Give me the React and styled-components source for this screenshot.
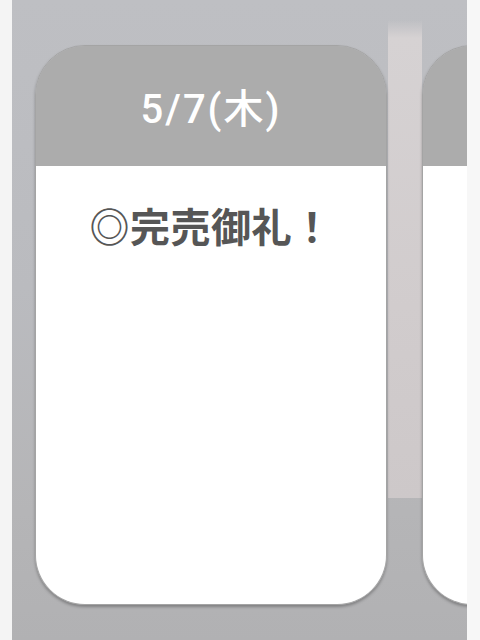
import React from 'react'
import styled, { createGlobalStyle } from 'styled-components'

const GlobalStyle = createGlobalStyle`
  html, body {
    margin: 0;
    padding: 0;
    background: #f5f5f5;
    font-family: "Noto Sans CJK JP", "Liberation Sans", sans-serif;
  }
`

const Page = styled.div`
  display: flex;
  width: 480px;
  height: 640px;
  overflow: hidden;
`

const Edge = styled.div`
  flex: 0 0 ${props => props.width}px;
  background: ${props => props.color};
`

// blurred photo behind the cards, with the light band that shows between them
const Stage = styled.div`
  flex: 1;
  display: flex;
  align-items: flex-start;
  gap: 35px;
  padding: 45px 0 0 23px;
  overflow: hidden;
  background:
    linear-gradient(to bottom, rgba(214,210,211,0) 0px, #d6d2d3 18px, #d1cccd 60%, #cdc8c9 100%) 376px 20px / 34px 478px no-repeat,
    linear-gradient(to bottom, #bebfc3 0%, #babbbf 45%, #b5b5b7 80%, #b1b1b3 100%);
`

const Card = styled.div`
  flex: 0 0 352px;
  height: 560px;
  display: flex;
  flex-direction: column;
  border-radius: 50px;
  overflow: hidden;
  border: 1px solid #a4a4a4;
  box-shadow: 0 2px 3px rgba(0, 0, 0, 0.28);
  box-sizing: border-box;
`

const CardHead = styled.div`
  height: 120px;
  display: flex;
  align-items: center;
  justify-content: center;
  background: #acacac;
  color: #ffffff;
  font-family: Roboto, "Noto Sans CJK JP", sans-serif;
  font-size: 40px;
  font-weight: 500;
  letter-spacing: 2px;
`

const CardBody = styled.div`
  flex: 1;
  background: #ffffff;
  padding-top: 35px;
  text-align: center;
  color: #565656;
  font-size: 40px;
  font-weight: 700;
  line-height: 48px;
  letter-spacing: 0.5px;
`

// the second card is only peeking in from the right edge
const days = [
  { id: 'thu', date: '5/7(木)', note: '◎完売御礼！' },
  { id: 'fri', date: '', note: '' },
]

export default function App() {
  return (
    <>
      <GlobalStyle />
      <Page>
        <Edge width={12} color="#f4f4f4" />
        <Stage>
          {days.map(day => (
            <Card key={day.id}>
              <CardHead>{day.date}</CardHead>
              <CardBody>{day.note}</CardBody>
            </Card>
          ))}
        </Stage>
        <Edge width={13} color="#f7f7f7" />
      </Page>
    </>
  )
}
